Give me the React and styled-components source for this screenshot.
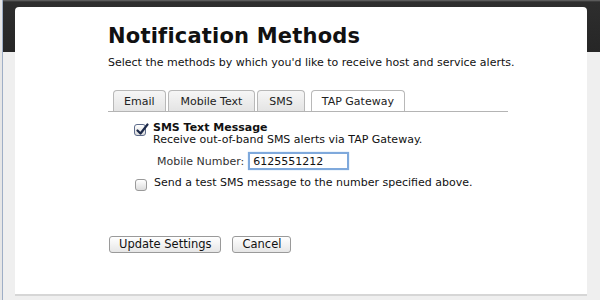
import styled, { createGlobalStyle } from 'styled-components';

const GlobalStyle = createGlobalStyle`
  html, body {
    margin: 0;
    padding: 0;
    background: #ececec;
  }
  * {
    box-sizing: border-box;
  }
`;

const Frame = styled.div`
  width: 600px;
  height: 300px;
  overflow: hidden;
  background: #e6e6e6;
  padding-left: 2px;
`;

const Backdrop = styled.div`
  height: 100%;
  border-left: 1px solid #9eaec6;
  background: linear-gradient(to bottom, #6a6a6a 0, #2e2e2e 2px, #262626 52px, #efefef 52px, #efefef 100%);
  padding: 7px 13px 0 12px;
`;

const Panel = styled.div`
  background: #fff;
  height: 289px;
  border-radius: 4px 4px 0 0;
  border-bottom: 2px solid #d6d6d6;
  padding: 16px 0 0 93px;
  font-family: "DejaVu Sans", Verdana, sans-serif;
  color: #111;
`;

const Title = styled.h1`
  margin: 0;
  font-size: 21px;
  font-weight: bold;
  letter-spacing: 0.2px;
  line-height: 26px;
`;

const Intro = styled.p`
  margin: 7px 0 0;
  font-size: 11px;
  line-height: 13px;
`;

const TabBar = styled.div`
  display: flex;
  gap: 2px;
  margin-top: 21px;
  padding-left: 5px;
  width: 400px;
  border-bottom: 1px solid #b4b4b4;
`;

const Tab = styled.div`
  height: 21px;
  padding: 0 ${p => p.$pad}px;
  display: flex;
  align-items: center;
  font-size: 11px;
  border: 1px solid #b8b8b8;
  border-bottom: none;
  border-radius: 4px 4px 0 0;
  background: ${p => (p.$active ? '#fff' : 'linear-gradient(to bottom, #f6f6f6, #e4e4e4)')};
  margin-bottom: ${p => (p.$active ? '-1px' : '0')};
  margin-left: ${p => (p.$active ? '4px' : '0')};
  color: #222;
`;

const Options = styled.div`
  padding: 10px 0 0 26px;
  display: flex;
  flex-direction: column;
`;

const OptionRow = styled.div`
  display: flex;
  gap: 7px;
  align-items: flex-start;
`;

const Box = styled.span`
  width: 12px;
  height: 12px;
  margin-top: 2px;
  flex: none;
  position: relative;
  border: 1px solid ${p => (p.$checked ? '#5d6b8a' : '#9a9a9a')};
  border-radius: 3px;
  background: linear-gradient(to bottom, #ffffff, #dcdcdc);
  svg {
    position: absolute;
    left: 0;
    top: -3px;
  }
`;

const OptionText = styled.div`
  font-size: 11px;
  line-height: 12px;
`;

const OptionTitle = styled.div`
  font-weight: bold;
  font-size: 11px;
`;

const FieldRow = styled.div`
  display: flex;
  align-items: center;
  gap: 4px;
  margin: 6px 0 0 23px;
  font-size: 11px;
  color: #333;
`;

const NumberInput = styled.div`
  width: 101px;
  height: 18px;
  border: 2px solid #7fa9dc;
  box-shadow: 0 0 1px #9dc0ea;
  padding: 0 3px;
  display: flex;
  align-items: center;
  font-size: 11px;
  color: #111;
`;

const TestRow = styled(OptionRow)`
  margin-top: 7px;
  margin-left: 1px;
`;

const Actions = styled.div`
  display: flex;
  gap: 11px;
  margin-top: 45px;
  margin-left: 1px;
`;

const Button = styled.button`
  height: 17px;
  padding: 0 9px;
  font-family: "DejaVu Sans", Verdana, sans-serif;
  font-size: 11.5px;
  color: #111;
  border: 1px solid #9a9a9a;
  border-radius: 3px;
  background: linear-gradient(to bottom, #ffffff, #e6e6e6);
  line-height: 15px;
`;

const Check = () => (
  <svg width="14" height="14" viewBox="0 0 14 14">
    <path d="M2.5 8.5 L5.5 11.5 L12.5 2.5" fill="none" stroke="#1d2a4a" strokeWidth="2.2" strokeLinecap="round" strokeLinejoin="round" />
  </svg>
);

const tabs = [
  { label: 'Email', pad: 10 },
  { label: 'Mobile Text', pad: 12 },
  { label: 'SMS', pad: 11 },
  { label: 'TAP Gateway', pad: 10, active: true },
];

const App = () => {
  return (
    <Frame>
      <GlobalStyle />
      <Backdrop>
        <Panel>
          <Title>Notification Methods</Title>
          <Intro>Select the methods by which you'd like to receive host and service alerts.</Intro>
          <TabBar>
            {tabs.map(t => (
              <Tab key={t.label} $pad={t.pad} $active={t.active}>{t.label}</Tab>
            ))}
          </TabBar>
          <Options>
            <OptionRow>
              <Box $checked><Check /></Box>
              <OptionText>
                <OptionTitle>SMS Text Message</OptionTitle>
                Receive out-of-band SMS alerts via TAP Gateway.
              </OptionText>
            </OptionRow>
            <FieldRow>
              Mobile Number:
              <NumberInput>6125551212</NumberInput>
            </FieldRow>
            <TestRow>
              <Box />
              <OptionText>Send a test SMS message to the number specified above.</OptionText>
            </TestRow>
          </Options>
          <Actions>
            <Button>Update Settings</Button>
            <Button>Cancel</Button>
          </Actions>
        </Panel>
      </Backdrop>
    </Frame>
  );
};

export default App;
